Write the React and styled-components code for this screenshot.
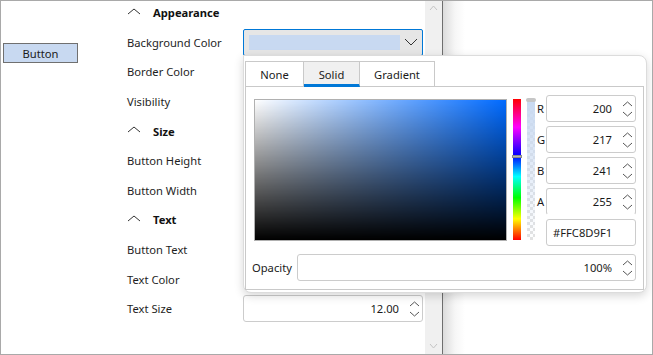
import styled, { createGlobalStyle } from 'styled-components';

const GlobalStyle = createGlobalStyle`
    html, body {
        margin: 0;
        padding: 0;
        background: #ffffff;
    }
    body {
        font-family: "Noto Sans", "Open Sans", sans-serif;
        font-size: 11.2px;
        color: #1a1a1a;
    }
`

const sections = [
    { title: 'Appearance', rows: ['Background Color', 'Border Color', 'Visibility'] },
    { title: 'Size', rows: ['Button Height', 'Button Width'] },
    { title: 'Text', rows: ['Button Text', 'Text Color', 'Text Size'] },
];

function Chevron({ up = true, color = '#333', width = 14, height = 7 })
{
    const points = up ? `1,${height - 1} ${width / 2},1 ${width - 1},${height - 1}` : `1,1 ${width / 2},${height - 1} ${width - 1},1`;
    return (
        <svg width={width} height={height} viewBox={`0 0 ${width} ${height}`}>
            <polyline points={points} fill="none" stroke={color} strokeWidth="1" />
        </svg>
    );
}

function Spinner()
{
    return (
        <SpinArrows>
            <Chevron up color="#555" width={11} height={6} />
            <Chevron up={false} color="#555" width={11} height={6} />
        </SpinArrows>
    );
}

function SpinBox({ value, open })
{
    return (
        <SpinField open={open}>
            <SpinValue>{value}</SpinValue>
            <Spinner />
        </SpinField>
    );
}

function ValueFor({ name })
{
    if (name === 'Background Color')
    {
        return (
            <Combo>
                <Swatch />
                <ComboArrow><Chevron up={false} color="#333" width={14} height={8} /></ComboArrow>
            </Combo>
        );
    }
    if (name === 'Text Size')
    {
        return <SpinBox value="12.00" />;
    }
    return null;
}

function ColorPopup()
{
    const channels = [['R', 200], ['G', 217], ['B', 241], ['A', 255]];
    return (
        <Popup>
            <Tabs>
                <Tab width="59px" first>None</Tab>
                <Tab width="56px" active>Solid</Tab>
                <Tab width="75px">Gradient</Tab>
            </Tabs>
            <TabPanel>
                <PickerRow>
                    <Spectrum />
                    <HueBar><HueThumb /></HueBar>
                    <AlphaBar><AlphaThumb /></AlphaBar>
                    <Channels>
                        {channels.map(([label, value]) => (
                            <ChannelRow key={label}>
                                <ChannelLabel>{label}</ChannelLabel>
                                <SpinBox value={value} open={label === 'A'} />
                            </ChannelRow>
                        ))}
                        <ChannelRow>
                            <ChannelLabel />
                            <HexField>#FFC8D9F1</HexField>
                        </ChannelRow>
                    </Channels>
                </PickerRow>
                <OpacityRow>
                    <OpacityLabel>Opacity</OpacityLabel>
                    <SpinBox value="100%" />
                </OpacityRow>
            </TabPanel>
        </Popup>
    );
}

function App()
{
    return (
        <>
            <GlobalStyle />
            <Window>
                <Canvas>
                    <DemoButton>Button</DemoButton>
                </Canvas>
                <PropertyPanel>
                    <List>
                        {sections.map(section => (
                            <div key={section.title}>
                                <Header>
                                    <HeaderIcon><Chevron up color="#333" /></HeaderIcon>
                                    <HeaderTitle>{section.title}</HeaderTitle>
                                </Header>
                                {section.rows.map(row => (
                                    <Row key={row}>
                                        <Label>{row}</Label>
                                        <ValueFor name={row} />
                                    </Row>
                                ))}
                            </div>
                        ))}
                    </List>
                </PropertyPanel>
                <ScrollBar>
                    <Chevron up color="#c4c4c4" width={9} height={6} />
                    <Chevron up={false} color="#c4c4c4" width={9} height={6} />
                </ScrollBar>
                <RightPane />
                <ColorPopup />
            </Window>
        </>
    );
}

export default App;

const Window = styled.div`
    position: relative;
    display: flex;
    width: 653px;
    height: 355px;
    box-sizing: border-box;
    border: 1px solid #a9a9a9;
    overflow: hidden;
`

const Canvas = styled.div`
    width: 99px;
    flex-shrink: 0;
    padding: 42px 0 0 2px;
    box-sizing: border-box;
`

const DemoButton = styled.div`
    width: 75px;
    height: 20px;
    box-sizing: border-box;
    border: 1px solid #707070;
    background: #c8d9f1;
    display: flex;
    align-items: center;
    justify-content: center;
    font-size: 11.2px;
`

const PropertyPanel = styled.div`
    width: 325px;
    flex-shrink: 0;
    overflow: hidden;
`

const List = styled.div`
    margin-top: -3px;
    padding-left: 27px;
`

const Header = styled.div`
    height: 29.6px;
    display: flex;
    align-items: center;
`

const HeaderIcon = styled.span`
    display: flex;
    width: 26px;
    margin-top: -3px;
`

const HeaderTitle = styled.span`
    font-weight: bold;
    color: #111;
`

const Row = styled.div`
    height: 29.6px;
    display: grid;
    grid-template-columns: 116px 180px;
    align-items: center;
`

const Label = styled.span`
    color: #1e1e1e;
`

const Combo = styled.div`
    height: 27px;
    box-sizing: border-box;
    border: 1px solid #0078d7;
    border-radius: 2px;
    background: #e6e6e6;
    display: flex;
    align-items: center;
    padding-left: 5px;
`

const Swatch = styled.div`
    width: 151px;
    height: 15px;
    background: #c8d9f1;
`

const ComboArrow = styled.span`
    display: flex;
    margin-left: 4px;
`

const SpinField = styled.div`
    height: 27px;
    box-sizing: border-box;
    border: 1px solid #cccccc;
    border-bottom-color: ${props => props.open ? 'transparent' : '#cccccc'};
    border-radius: 3px;
    background: #ffffff;
    display: flex;
    align-items: center;
    justify-content: flex-end;
    padding-right: 2px;
    flex: 1;
`

const SpinValue = styled.span`
    color: #1a1a1a;
    margin-right: 10px;
`

const SpinArrows = styled.span`
    display: flex;
    flex-direction: column;
    gap: 4px;
`

const ScrollBar = styled.div`
    width: 17px;
    flex-shrink: 0;
    background: #f0f0f0;
    display: flex;
    flex-direction: column;
    justify-content: space-between;
    align-items: center;
    padding: 4px 0 5px;
    box-sizing: border-box;
`

const RightPane = styled.div`
    flex: 1;
    border-left: 1px solid #6e6e6e;
    background: linear-gradient(to right, #dcdcdc, #f6f6f6 12px, #ffffff 22px);
`

const Popup = styled.div`
    position: absolute;
    left: 242px;
    top: 54px;
    width: 404px;
    height: 238px;
    box-sizing: border-box;
    background: #ffffff;
    border: 1px solid #dcdcdc;
    border-radius: 0 8px 8px 8px;
    box-shadow: 0 3px 10px rgba(0, 0, 0, 0.16);
    padding: 5px 2px 2px 1px;
    display: flex;
    flex-direction: column;
`

const Tabs = styled.div`
    display: flex;
    height: 26px;
    margin-bottom: -1px;
    position: relative;
`

const Tab = styled.div`
    width: ${props => props.width};
    box-sizing: border-box;
    border: 1px solid #c9c9c9;
    border-left-width: ${props => props.first ? '1px' : '0'};
    border-bottom: ${props => props.active ? '3px solid #0078d7' : '1px solid #c9c9c9'};
    background: ${props => props.active ? '#f0f0f0' : '#ffffff'};
    display: flex;
    align-items: center;
    justify-content: center;
    padding-top: ${props => props.active ? '2px' : '0'};
    color: #1a1a1a;
`

const TabPanel = styled.div`
    flex: 1;
    border: 1px solid #c9c9c9;
    padding: 8px 7px 7px 6px;
    display: flex;
    flex-direction: column;
    gap: 8px;
`

const PickerRow = styled.div`
    display: flex;
    align-items: flex-start;
`

const Spectrum = styled.div`
    width: 254px;
    height: 142px;
    margin: 4px 0 0 2px;
    box-sizing: border-box;
    border: 1px solid #b0b0b0;
    background:
        linear-gradient(to top, #000000, rgba(0, 0, 0, 0)),
        linear-gradient(to right, #ffffff, #006aff);
`

const HueBar = styled.div`
    position: relative;
    width: 8px;
    height: 141px;
    margin: 4px 0 0 6px;
    background: linear-gradient(to bottom, #ff0000, #ff00ff 20%, #0000ff 40%, #00ffff 55%, #00ff00 70%, #ffff00 85%, #ff0000);
`

const HueThumb = styled.div`
    position: absolute;
    left: -1px;
    right: -1px;
    top: 56px;
    height: 3px;
    background: #b8b8b8;
    border: 1px solid #8a8a8a;
    box-sizing: border-box;
`

const AlphaBar = styled.div`
    position: relative;
    width: 8px;
    height: 141px;
    margin: 4px 0 0 6px;
    background:
        linear-gradient(to bottom, rgba(200, 217, 241, 1), rgba(200, 217, 241, 0)),
        repeating-conic-gradient(#e2e2e2 0 25%, #ffffff 0 50%) 0 0 / 6px 6px;
`

const AlphaThumb = styled.div`
    position: absolute;
    left: -1px;
    right: -1px;
    top: -1px;
    height: 4px;
    background: #c6c6c6;
    border-radius: 2px;
`

const Channels = styled.div`
    display: flex;
    flex-direction: column;
    gap: 4px;
    margin-left: 2px;
`

const ChannelRow = styled.div`
    display: flex;
    align-items: center;
    height: 27px;
`

const ChannelLabel = styled.span`
    width: 9px;
    color: #1a1a1a;
`

const HexField = styled.div`
    width: 90px;
    height: 27px;
    box-sizing: border-box;
    border: 1px solid #cccccc;
    border-radius: 3px;
    display: flex;
    align-items: center;
    padding-left: 6px;
    color: #1a1a1a;
`

const OpacityRow = styled.div`
    display: flex;
    align-items: center;
    height: 27px;
`

const OpacityLabel = styled.span`
    width: 45px;
    color: #1a1a1a;
`
